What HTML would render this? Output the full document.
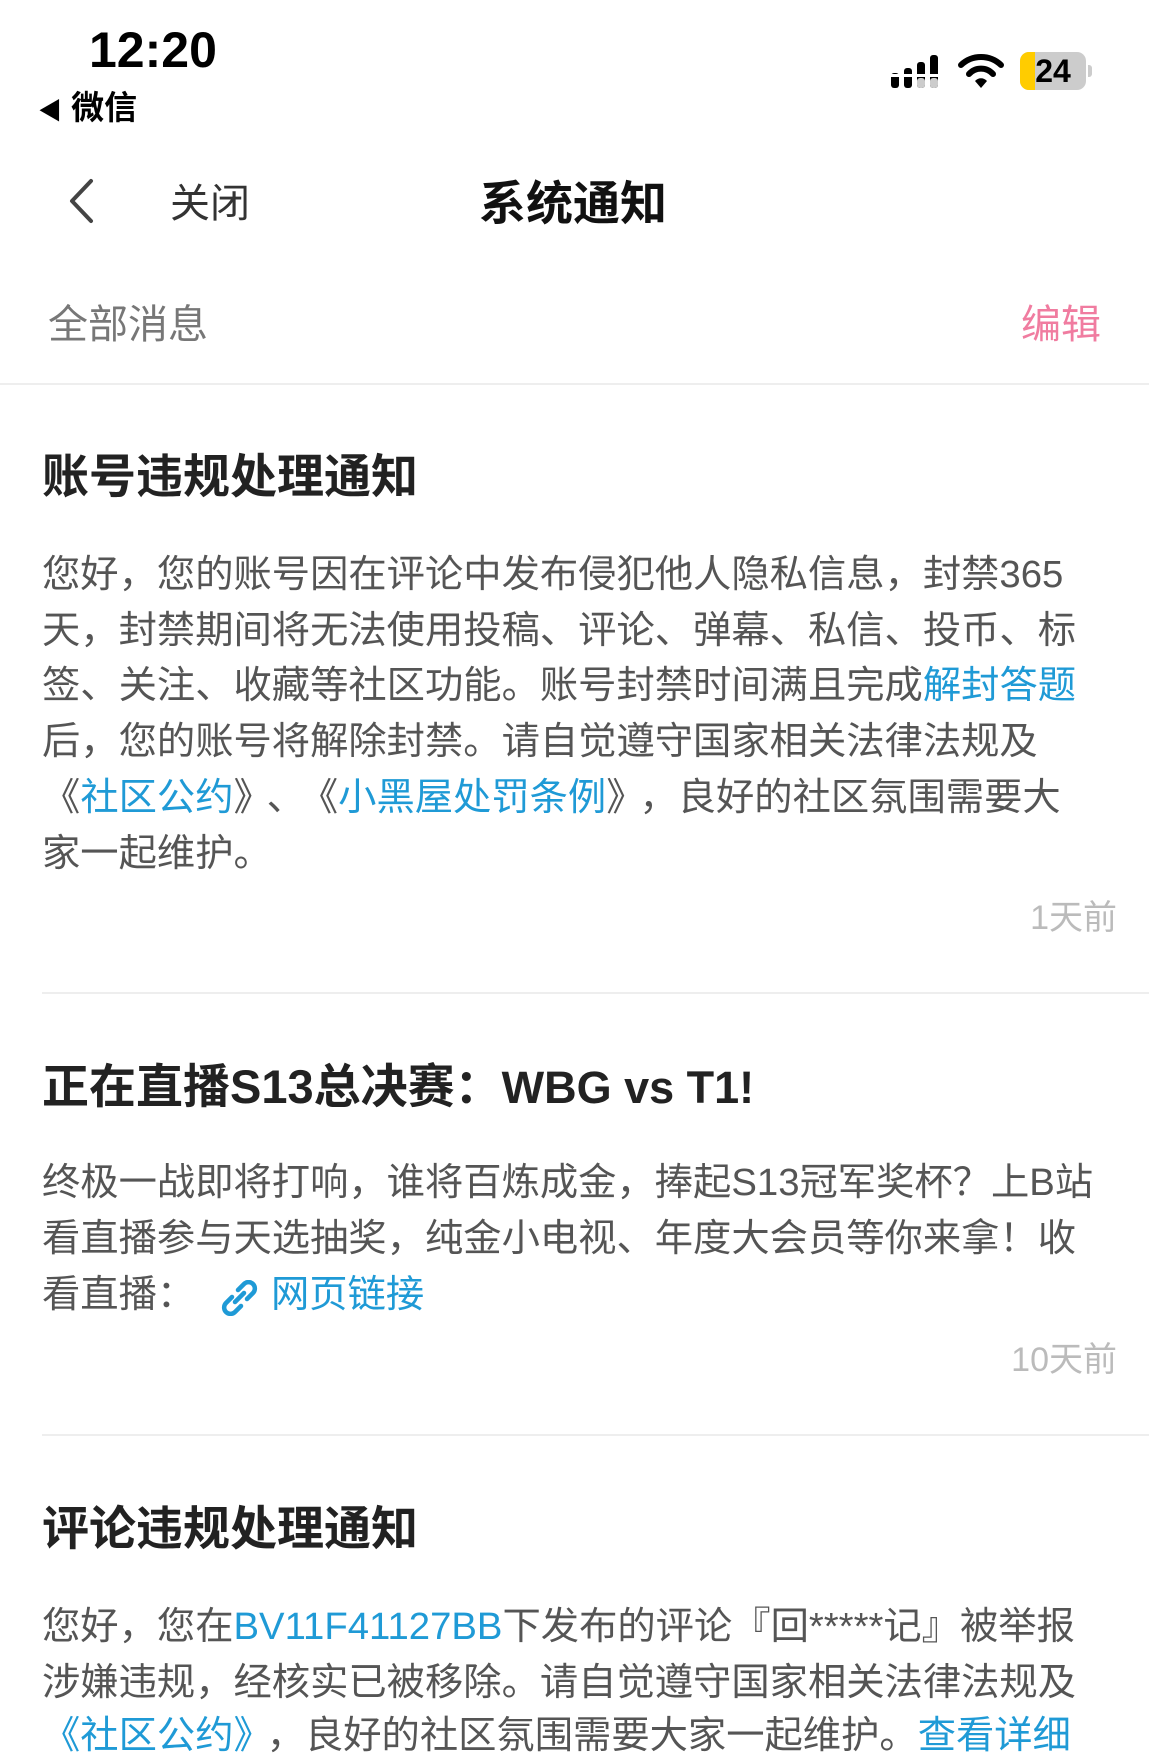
<!DOCTYPE html>
<html><head><meta charset="utf-8">
<style>
*{margin:0;padding:0;box-sizing:border-box}
body{width:1149px;height:1747px;background:#fff;position:relative;overflow:hidden;font-family:"Liberation Sans","Noto Sans CJK SC",sans-serif}
.a{position:absolute;white-space:nowrap}
.t{left:42px;font-size:47px;font-weight:bold;color:#222;height:60px;line-height:60px}
.b{left:42px;font-size:38.3px;color:#555;height:56px;line-height:56px}
.l{color:#1f9ad6}
.g{margin-right:14px}
.tm{right:32px;font-size:34px;color:#bbb;height:40px;line-height:40px}
.hr{position:absolute;left:42px;right:0;height:2px;background:#eee}
</style></head><body>
<div class="a" style="left:89px;top:22px;font-size:50px;font-weight:bold;color:#000;line-height:56px">12:20</div>
<div class="a" style="left:38px;top:89px;font-size:33px;font-weight:bold;color:#000;line-height:38px"><span style="font-size:24px">◀</span> 微信</div>
<svg class="a" style="left:890px;top:54px" width="54" height="36" viewBox="0 0 54 36">
<rect x="1" y="19" width="8" height="15" rx="3" fill="#000"/>
<rect x="14" y="14" width="8" height="20" rx="3" fill="#000"/>
<rect x="27" y="8" width="8" height="26" rx="3" fill="#000"/>
<rect x="40" y="1" width="8" height="33" rx="3" fill="#000"/>
<rect x="27" y="24" width="8" height="10" rx="3" fill="#ccc"/>
<rect x="40" y="24" width="8" height="10" rx="3" fill="#ccc"/>
<rect x="0" y="20" width="54" height="3" fill="#fff"/>
</svg>
<svg class="a" style="left:958px;top:52px" width="46" height="38" viewBox="0 0 46 38">
<path d="M3 13 A29 29 0 0 1 43 13" stroke="#000" stroke-width="6" fill="none" stroke-linecap="round"/>
<path d="M11 22 A16 16 0 0 1 35 22" stroke="#000" stroke-width="6" fill="none" stroke-linecap="round"/>
<path d="M17 29 L23 36 L29 29 A8 8 0 0 0 17 29Z" fill="#000"/>
</svg>
<div class="a" style="left:1020px;top:52px;width:66px;height:38px;border-radius:9px;background:#ccc;overflow:hidden">
<div style="position:absolute;left:0;top:0;width:15px;height:38px;background:#ffcc00"></div>
<div style="position:absolute;left:0;top:0;width:66px;text-align:center;font-size:32px;font-weight:bold;line-height:38px;color:#000">24</div>
</div>
<div class="a" style="left:1088px;top:65px;width:4px;height:12px;border-radius:0 3px 3px 0;background:#ccc"></div>

<svg class="a" style="left:64px;top:178px" width="34" height="46" viewBox="0 0 34 46"><path d="M27 3 L8 23 L27 43" stroke="#444" stroke-width="4" fill="none" stroke-linecap="round" stroke-linejoin="round"/></svg>
<div class="a" style="left:170px;top:180px;font-size:40px;color:#333;line-height:48px">关闭</div>
<div class="a" style="left:479px;top:176px;font-size:47px;font-weight:bold;color:#111;line-height:56px">系统通知</div>
<div class="a" style="left:48px;top:301px;font-size:40px;color:#777;line-height:48px">全部消息</div>
<div class="a" style="left:1021px;top:301px;font-size:40px;color:#f07ca0;line-height:48px">编辑</div>
<div class="hr" style="left:0;top:383px"></div>

<div class="a t" style="top:447px">账号违规处理通知</div>
<div class="a b" style="top:547px">您好，您的账号因在评论中发布侵犯他人隐私信息，封禁365</div>
<div class="a b" style="top:603px">天，封禁期间将无法使用投稿、评论、弹幕、私信、投币、标</div>
<div class="a b" style="top:658px">签、关注、收藏等社区功能。账号封禁时间满且完成<span class="l">解封答题</span></div>
<div class="a b" style="top:714px">后，您的账号将解除封禁。请自觉遵守国家相关法律法规及</div>
<div class="a b" style="top:770px">《<span class="l">社区公约</span>》<span class="g"></span>、<span class="g"></span>《<span class="l">小黑屋处罚条例</span>》<span class="g"></span>，良好的社区氛围需要大</div>
<div class="a b" style="top:826px">家一起维护。</div>
<div class="a tm" style="top:898px">1天前</div>
<div class="hr" style="top:992px"></div>

<div class="a t" style="top:1057px">正在直播S13总决赛：<span style="font-size:45px">WBG vs T1!</span></div>
<div class="a b" style="top:1155px">终极一战即将打响，谁将百炼成金，捧起S13冠军奖杯？上B站</div>
<div class="a b" style="top:1211px">看直播参与天选抽奖，纯金小电视、年度大会员等你来拿！收</div>
<div class="a b" style="top:1267px">看直播：</div>
<svg class="a" style="left:221px;top:1280px" width="38" height="36" viewBox="0 0 38 36">
<g stroke="#1f9ad6" stroke-width="4.5" fill="none" stroke-linecap="round">
<path d="M17 10 L23 4 A6 6 0 0 1 32 13 L26 19"/>
<path d="M20 26 L14 32 A6 6 0 0 1 5 23 L11 17"/>
<path d="M14 22 L23 13"/>
</g></svg>
<div class="a b l" style="left:271px;top:1267px">网页链接</div>
<div class="a tm" style="top:1340px">10天前</div>
<div class="hr" style="top:1434px"></div>

<div class="a t" style="top:1499px">评论违规处理通知</div>
<div class="a b" style="top:1599px">您好，您在<span class="l">BV11F41127BB</span>下发布的评论『回*****记』被举报</div>
<div class="a b" style="top:1655px">涉嫌违规，经核实已被移除。请自觉遵守国家相关法律法规及</div>
<div class="a b" style="top:1708px"><span class="l">《社区公约》</span><span class="g"></span>，良好的社区氛围需要大家一起维护。<span class="l">查看详细</span></div>
</body></html>
